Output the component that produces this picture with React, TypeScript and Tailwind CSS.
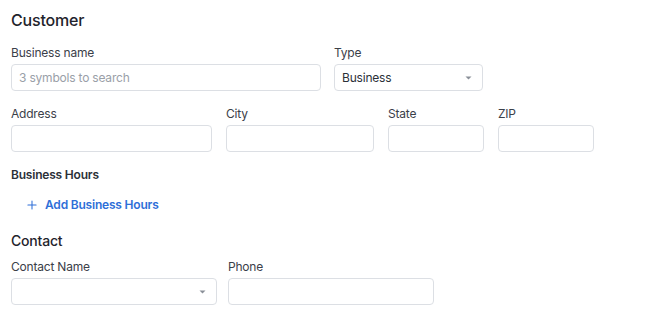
import { Plus } from "lucide-react";

type FieldProps = {
  label: string;
  width: string;
  placeholder?: string;
  value?: string;
  select?: boolean;
};

function Caret() {
  return (
    <svg width="7" height="4" viewBox="0 0 7 4" className="absolute right-[10px] top-1/2 -translate-y-1/2">
      <path d="M0.5 0.5 L3.5 3.5 L6.5 0.5 Z" fill="#8a8f98" />
    </svg>
  );
}

function Field({ label, width, placeholder, value, select }: FieldProps) {
  return (
    <div className={`flex flex-col ${width}`}>
      <label className="text-[12px] leading-4 text-[#3b4049]">{label}</label>
      <div className="relative mt-[3px] h-[27px] rounded-[4px] border border-[#dcdfe4] bg-white">
        {value ? (
          <span className="absolute left-[7px] top-1/2 -translate-y-1/2 text-[12px] text-[#2b3038]">
            {value}
          </span>
        ) : placeholder ? (
          <span className="absolute left-[7px] top-1/2 -translate-y-1/2 text-[12px] text-[#9aa0a8]">
            {placeholder}
          </span>
        ) : null}
        {select ? <Caret /> : null}
      </div>
    </div>
  );
}

export default function App() {
  return (
    <div className="h-[316px] w-[656px] bg-white px-[11px] pt-[10px] font-['Inter',sans-serif] tracking-[-0.2px]">
      <h1 className="text-[16px] leading-5 font-medium text-[#1f242c]">Customer</h1>

      <div className="mt-[15px] flex gap-[13px]">
        <Field label="Business name" width="w-[310px]" placeholder="3 symbols to search" />
        <Field label="Type" width="w-[149px]" value="Business" select />
      </div>

      <div className="mt-[15px] flex gap-[14px]">
        <Field label="Address" width="w-[201px]" />
        <Field label="City" width="w-[148px]" />
        <Field label="State" width="w-[96px]" />
        <Field label="ZIP" width="w-[96px]" />
      </div>

      <div className="mt-[15px] text-[12px] leading-4 font-semibold text-[#2b3038]">Business Hours</div>

      <button
        type="button"
        className="mt-[10px] ml-[15px] flex h-[24px] items-center gap-[6px] text-[12px] font-semibold text-[#2e6fd8]"
      >
        <Plus size={14} strokeWidth={1.8} className="-ml-[1px]" />
        Add Business Hours
      </button>

      <h2 className="mt-[14px] text-[14px] leading-5 font-medium text-[#1f242c]">Contact</h2>

      <div className="mt-[8px] flex gap-[11px]">
        <Field label="Contact Name" width="w-[206px]" select />
        <Field label="Phone" width="w-[206px]" />
      </div>
    </div>
  );
}
